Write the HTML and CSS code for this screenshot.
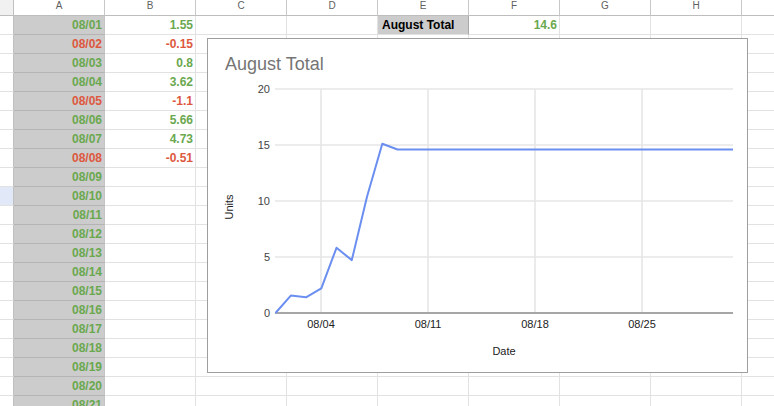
FILE: index.html
```html
<!DOCTYPE html>
<html lang="en">

<head>
  <meta charset="UTF-8">
  <title>August Total</title>
  <link rel="stylesheet" href="styles.css">
</head>

<body>
  <div class="sheet" id="sheet">
    <div class="row col-heads">
      <div class="row-head"></div>
      <div class="cell">A</div>
      <div class="cell">B</div>
      <div class="cell">C</div>
      <div class="cell">D</div>
      <div class="cell">E</div>
      <div class="cell">F</div>
      <div class="cell">G</div>
      <div class="cell">H</div>
      <div class="cell"></div>
    </div>
  </div>

  <div class="chart">
    <svg width="539" height="333" viewBox="208 39 539 333">
      <text class="chart-title" x="225" y="70">August Total</text>

      <!-- gridlines -->
      <g class="grid">
        <line x1="275" y1="89" x2="733" y2="89" />
        <line x1="275" y1="145" x2="733" y2="145" />
        <line x1="275" y1="201" x2="733" y2="201" />
        <line x1="275" y1="257" x2="733" y2="257" />
        <line x1="321" y1="89" x2="321" y2="313" />
        <line x1="428" y1="89" x2="428" y2="313" />
        <line x1="535" y1="89" x2="535" y2="313" />
        <line x1="642" y1="89" x2="642" y2="313" />
      </g>
      <line class="axis" x1="275" y1="313" x2="733" y2="313" />

      <g class="tick-y">
        <text x="270" y="93">20</text>
        <text x="270" y="149">15</text>
        <text x="270" y="205">10</text>
        <text x="270" y="261">5</text>
        <text x="270" y="317">0</text>
      </g>
      <g class="tick-x">
        <text x="321" y="328">08/04</text>
        <text x="428" y="328">08/11</text>
        <text x="535" y="328">08/18</text>
        <text x="642" y="328">08/25</text>
      </g>

      <text class="axis-title" x="504" y="355">Date</text>
      <text class="axis-title" transform="translate(233,207) rotate(-90)">Units</text>

      <!-- running total, one point per day -->
      <polyline class="series"
        points="275.5,313 290.8,295.6 306,297.3 321.3,288.4 336.5,247.8 351.8,260.1 367,196.7 382.3,143.8 397.5,149.5 733,149.5" />
    </svg>
  </div>

  <script>
    // daily change for the first days of August
    const changes = [1.55, -0.15, 0.8, 3.62, -1.1, 5.66, 4.73, -0.51];
    const sheet = document.getElementById('sheet');

    for (let i = 0; i < 21; i++) {
      const row = document.createElement('div');
      row.className = 'row' + (i === 9 ? ' selected' : '');

      const head = document.createElement('div');
      head.className = 'row-head';
      row.appendChild(head);

      for (let c = 0; c < 9; c++) {
        const cell = document.createElement('div');
        cell.className = 'cell';
        const value = changes[i];
        const tone = value < 0 ? 'down' : 'up';

        if (c === 0) {
          cell.classList.add('date', tone);
          cell.textContent = '08/' + String(i + 1).padStart(2, '0');
        } else if (c === 1 && value !== undefined) {
          cell.classList.add(tone);
          cell.textContent = value;
        } else if (i === 0 && c === 4) {
          cell.classList.add('label');
          cell.textContent = 'August Total';
        } else if (i === 0 && c === 5) {
          cell.classList.add('up');
          cell.textContent = '14.6';
        }
        row.appendChild(cell);
      }
      sheet.appendChild(row);
    }
  </script>
</body>

</html>
```

FILE: styles.css
```css
* {
  box-sizing: border-box;
  margin: 0;
  padding: 0;
}

body {
  font-family: "Liberation Sans", Arial, sans-serif;
  background-color: #ffffff;
  width: 774px;
  height: 406px;
  overflow: hidden;
  position: relative;
}

.sheet {
  display: flex;
  flex-direction: column;
  height: 406px;
  overflow: hidden;
}

.row {
  display: flex;
  flex: 0 0 19px;
  height: 19px;
}

.row-head {
  flex: 0 0 14px;
  border-right: 1px solid #c0c0c0;
  border-bottom: 1px solid #e2e2e2;
}

.row.selected .row-head {
  background-color: #e1e9f8;
}

.cell {
  flex: 0 0 91px;
  border-right: 1px solid #e2e2e2;
  border-bottom: 1px solid #e2e2e2;
  font-size: 12px;
  font-weight: bold;
  line-height: 18px;
  text-align: right;
  padding-right: 2px;
  white-space: nowrap;
  overflow: hidden;
}

.row.col-heads {
  flex-basis: 16px;
  height: 16px;
}

.col-heads .row-head {
  background-color: #f1f1f1;
  border-bottom-color: #bdbdbd;
}

.col-heads .cell {
  border-right-color: #c8c8c8;
  border-bottom-color: #bdbdbd;
  font-size: 10px;
  font-weight: normal;
  color: #5f5f5f;
  line-height: 11px;
  text-align: center;
  padding: 0;
}

.date {
  background-color: #cccccc;
  border-bottom-color: #b4b4b4;
  border-right-color: #c4c4c4;
}

.up {
  color: #6aa84f;
}

.down {
  color: #de5840;
}

.label {
  background-color: #cccccc;
  color: #000000;
  text-align: left;
  padding-left: 4px;
  border-right-color: #a8a8a8;
}

/* chart floats over the grid */
.chart {
  position: absolute;
  left: 207px;
  top: 38px;
  width: 541px;
  height: 335px;
  border: 1px solid #9e9e9e;
  background-color: #ffffff;
}

.chart svg {
  display: block;
}

.chart text {
  font-family: "Liberation Sans", Arial, sans-serif;
}

.chart-title {
  font-size: 18px;
  fill: #757575;
}

.grid line {
  stroke: #e6e6e6;
  stroke-width: 1.6;
}

.axis {
  stroke: #a6a6a6;
  stroke-width: 2;
}

.tick-y text {
  font-size: 11px;
  fill: #444444;
  text-anchor: end;
}

.tick-x text {
  font-size: 11px;
  fill: #222222;
  text-anchor: middle;
}

.axis-title {
  font-size: 11px;
  fill: #222222;
  text-anchor: middle;
}

.series {
  fill: none;
  stroke: #6b8ff0;
  stroke-width: 2;
  stroke-linejoin: round;
}
```
